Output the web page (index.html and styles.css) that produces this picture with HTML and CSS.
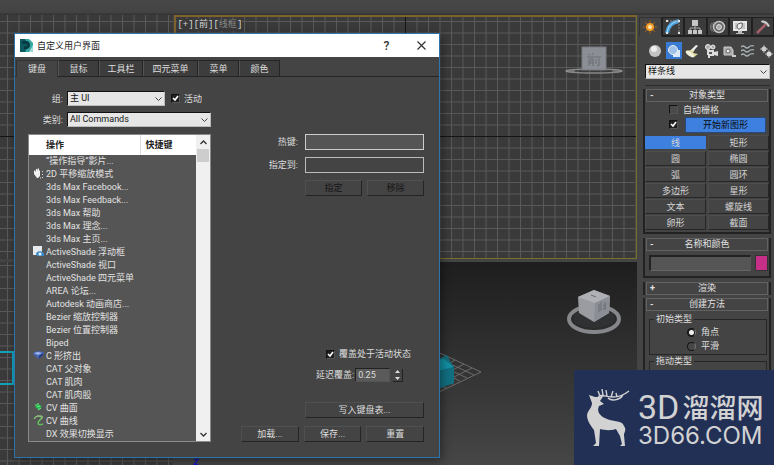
FILE: index.html
```
<!DOCTYPE html>
<html lang="zh-CN">
<head>
<meta charset="utf-8">
<meta name="viewport" content="width=device-width, initial-scale=1">
<title>自定义用户界面</title>
<link rel="stylesheet" href="styles.css">
</head>
<body>
<header class="toolbar"></header>
<div class="workspace">
  <main class="viewports">
    <section class="viewport">
      <svg class="scene" aria-hidden="true">
        <defs><pattern id="gridA" x="7" y="121" width="11.5" height="11.5" patternUnits="userSpaceOnUse"><path d="M.5 0V11.5M0 .5H11.5" stroke="#5a5a5a" fill="none"/></pattern></defs>
        <rect width="100%" height="100%" fill="url(#gridA)"/>
        <path d="M0 121.5H800" stroke="#141414"/>
      </svg>
    </section>
    <section class="viewport viewport-active">
      <svg class="scene" aria-hidden="true">
        <defs><pattern id="gridB" x="229" y="119" width="11.5" height="11.5" patternUnits="userSpaceOnUse"><path d="M.5 0V11.5M0 .5H11.5" stroke="#5a5a5a" fill="none"/></pattern></defs>
        <rect width="100%" height="100%" fill="url(#gridB)"/>
        <path d="M0 119.5H2000M229.5 0V800" stroke="#141414"/>
      </svg>
      <p class="view-label">[+][前][<span class="dim">线框</span>]</p>
      <svg class="cube-front" width="60" height="30" viewBox="0 0 60 30" aria-hidden="true">
        <ellipse cx="30" cy="25" rx="28" ry="2" fill="none" stroke="#858789" stroke-width="1.5"/>
        <path d="M2 25H11M49 25H58" stroke="#999" />
        <rect x="18" y="1" width="24" height="23" fill="#8b8e95" stroke="#777a80"/>
        <path d="M24 8l2 1M29 7l-1 2M23 11H37M25 13v7M25 13h4v7M25 15h4M25 17h4M32 13v5M35 12v8l-2-1" stroke="#6c6f76" fill="none"/>
      </svg>
    </section>
    <section class="viewport">
      <svg class="scene" aria-hidden="true">
        <defs><pattern id="gridC" x="7" y="3" width="11.5" height="11.5" patternUnits="userSpaceOnUse"><path d="M.5 0V11.5M0 .5H11.5" stroke="#5a5a5a" fill="none"/></pattern></defs>
        <rect width="100%" height="100%" fill="url(#gridC)"/>
        <rect x="-2" y="90" width="15" height="32" fill="none" stroke="#12a2bb" stroke-width="2"/>
      </svg>
    </section>
    <section class="viewport viewport-persp">
      <svg class="scene" aria-hidden="true">
        <g stroke="#777" stroke-width=".8" fill="none">
          <path d="M240 79L307 110L240 142M240 85L300 113M240 91L293 116M240 98L286 119M240 104L279 122M240 111L272 126M240 117L265 130M240 124L258 133M240 135L298 106M240 129L290 102M240 122L281 98M240 116L273 94M240 110L265 91M240 103L257 87"/>
        </g>
        <path d="M262 98L273 93L280 106L276 121L262 127Z" fill="#176c7a"/>
        <path d="M258 98L270 97L280 105L264 109Z" fill="#138fa2"/>
        <path d="M264 109V127L260 126V106Z" fill="#07323b"/>
        <path d="M264 109L280 105V121L264 127Z" fill="#116f80"/>
        <path d="M20 197.500h4l-4 5h4" stroke="#1515b8" stroke-width="1.300" fill="none"/>
      </svg>
      <svg class="cube-persp" width="56" height="46" viewBox="0 0 56 46" aria-hidden="true">
        <ellipse cx="28" cy="30" rx="25" ry="13" fill="none" stroke="#85878a" stroke-width="4"/>
        <ellipse cx="28" cy="29" rx="21" ry="10" fill="#303132"/>
        <path d="M28 1L44 7L43 24L28 33L13 24L12 8Z" fill="#9a9ca2"/>
        <path d="M12 8L28 1L44 7L29 14Z" fill="#aeb0b5"/>
        <path d="M29 14L44 7L43 24L28 33Z" fill="#8b8e95"/>
        <path d="M25 6l5 2M33 15v8M35 13v9M37 17l3-2M37 20l3-2M39 13v8" stroke="#6b6e75" fill="none"/>
      </svg>
    </section>
  </main>

  <aside class="panel">
    <nav class="panel-tabs">
      <button class="ptab ptab-on" aria-label="创建"><svg width="16" height="16" viewBox="0 0 16 16"><path d="M8 1v14M1 8h14M3 3l10 10M13 3L3 13" stroke="#a45d12" stroke-width="1"/><circle cx="8" cy="8" r="4" fill="#f39a28"/><circle cx="8" cy="8" r="2" fill="#ffe7a8"/></svg></button>
      <button class="ptab" aria-label="修改"><svg width="16" height="16" viewBox="0 0 16 16"><path d="M2 14C3 7 7 3 14 2" stroke="#4ba0dd" stroke-width="4" fill="none"/><path d="M2 14C3 7 7 3 14 2" stroke="#a6dcfa" fill="none"/><path d="M2 2h12v12" stroke="#888" stroke-dasharray="2 1" fill="none"/><path d="M1 1h2v2H1zM13 1h2v2h-2zM1 13h2v2H1zM13 13h2v2h-2z" fill="#ddd"/></svg></button>
      <button class="ptab" aria-label="层次"><svg width="16" height="16" viewBox="0 0 16 16"><path d="M5 1h6v6H5zM1 11h4v4H1zM6 11h4v4H6zM11 11h4v4h-4z" fill="#c6c6c6"/><path d="M8 6v5M3 11V9h10v2" stroke="#aaa" fill="none"/></svg></button>
      <button class="ptab" aria-label="运动"><svg width="16" height="16" viewBox="0 0 16 16"><path d="M4 3C1 5 1 11 4 13M2 4C0 6 0 10 2 12" stroke="#777" fill="none"/><circle cx="9" cy="8" r="5.500" fill="#666" stroke="#c4c4c4" stroke-width="1.500"/><circle cx="9" cy="8" r="2.500" fill="#aaa" stroke="#ddd"/></svg></button>
      <button class="ptab" aria-label="显示"><svg width="16" height="16" viewBox="0 0 16 16"><path d="M1 2h14v10H1z" fill="#e6e6e6"/><path d="M3 4h10v6H3z" fill="#c5c5c5"/><path d="M5 7c0-2 3-3 5-3 1 3-1 6-3 6-1 0-2-1-2-3z" fill="#eee" stroke="#555"/><path d="M6 12h4v2h2v1H4v-1h2z" fill="#bbb"/></svg></button>
      <button class="ptab" aria-label="实用程序"><svg width="16" height="16" viewBox="0 0 16 16"><path d="M2 14L11 5" stroke="#a3606a" stroke-width="2.500"/><path d="M6 2c3-1 5 0 7 2l2 3-2 1-2-3-5-2z" fill="#c8c8c8"/></svg></button>
    </nav>
    <div class="categories">
      <button class="cat" aria-label="几何体"><svg width="14" height="14" viewBox="0 0 14 14"><circle cx="7" cy="7" r="6" fill="#c3c3c3"/><circle cx="6" cy="5" r="3" fill="#ededed"/></svg></button>
      <button class="cat cat-on" aria-label="图形"><svg width="14" height="14" viewBox="0 0 14 14"><path d="M6 6h7v7H6z" fill="#dce9f8"/><circle cx="6" cy="6" r="4.500" fill="#9fc1ea" stroke="#eee"/></svg></button>
      <button class="cat" aria-label="灯光"><svg width="14" height="14" viewBox="0 0 14 14"><path d="M12 1L8 9l5 1-4 3-8-6 5-1z" fill="#ded99a"/><path d="M11 1l2 1-5 5-2-1z" fill="#eee"/><ellipse cx="5" cy="10" rx="5" ry="2" transform="rotate(35 5 10)" fill="#f1f0db"/></svg></button>
      <button class="cat" aria-label="摄影机"><svg width="14" height="14" viewBox="0 0 14 14"><circle cx="4" cy="3" r="2.500" fill="#aaa" stroke="#eee"/><circle cx="9" cy="3" r="2" fill="#aaa" stroke="#eee"/><path d="M3 6h7v2l4-1v5l-4-1v1H6v2H4v-3H3z" fill="#ddd"/><path d="M5 8h3v2H5z" fill="#555"/></svg></button>
      <button class="cat" aria-label="辅助对象"><svg width="14" height="14" viewBox="0 0 14 14"><path d="M2 3h7l2 3v5H2z" fill="#aaa" stroke="#ccc"/><circle cx="6" cy="7" r="2" fill="#eee" stroke="#666"/><path d="M10 12h4" stroke="#ccc" stroke-width="2"/></svg></button>
      <button class="cat" aria-label="空间扭曲"><svg width="14" height="14" viewBox="0 0 14 14"><path d="M0 3q2-2 4 0t4 0 5-1M0 7q2-2 4 0t4 0 5-1M0 11q2-2 4 0t4 0 5-1" stroke="#a7b1b4" stroke-width="1.300" fill="none"/></svg></button>
      <button class="cat" aria-label="系统"><svg width="14" height="14" viewBox="0 0 14 14"><path d="M1 5h8M5 1v8M6 10h8M10 6v8" stroke="#aaa"/><circle cx="5" cy="5" r="2.500" fill="#ccc"/><circle cx="10" cy="10" r="2.500" fill="#ddd"/></svg></button>
    </div>
    <select class="combo panel-combo" aria-label="对象类别"><option>样条线</option></select>

    <section class="rollout">
      <h2><span>-</span>对象类型</h2>
      <div class="type-opts">
        <label class="auto-grid"><input type="checkbox" class="check check-off">自动栅格</label>
        <div class="start-row"><input type="checkbox" class="check" checked aria-label="开始新图形"><button class="start">开始新图形</button></div>
      </div>
      <div class="types">
        <button class="type type-on">线</button><button class="type">矩形</button>
        <button class="type">圆</button><button class="type">椭圆</button>
        <button class="type">弧</button><button class="type">圆环</button>
        <button class="type">多边形</button><button class="type">星形</button>
        <button class="type">文本</button><button class="type">螺旋线</button>
        <button class="type">卵形</button><button class="type">截面</button>
      </div>
    </section>
    <section class="rollout">
      <h2><span>-</span>名称和颜色</h2>
      <div class="name-row"><input class="name" type="text" aria-label="名称"><button class="swatch" aria-label="颜色"></button></div>
    </section>
    <section class="rollout rollout-closed">
      <h2><span>+</span>渲染</h2>
    </section>
    <section class="rollout">
      <h2><span>-</span>创建方法</h2>
      <fieldset class="group">
        <legend>初始类型</legend>
        <label><input type="radio" name="initial" checked>角点</label>
        <label><input type="radio" name="initial">平滑</label>
      </fieldset>
      <fieldset class="group group-drag">
        <legend>拖动类型</legend>
      </fieldset>
    </section>
  </aside>
</div>

<div class="dialog" role="dialog" aria-labelledby="dialog-title">
  <header class="titlebar">
    <svg width="13" height="13" viewBox="0 0 13 13" aria-hidden="true"><path d="M0 0h9l4 4v9H0z" fill="#36a6a2"/><path d="M0 0h5l4 6-4 7H0z" fill="#0d5b61"/><path d="M2 2h5c4 1 4 7 0 8H4V7h3V5H2z" fill="#073c43"/><path d="M9 13L13 6v7z" fill="#a4dcd5"/></svg>
    <h1 id="dialog-title">自定义用户界面</h1>
    <button class="win-btn" aria-label="帮助">?</button>
    <button class="win-btn" aria-label="关闭"><svg width="9" height="9" viewBox="0 0 9 9"><path d="M.5 .5l8 8M8.500 .5l-8 8" stroke="#333" stroke-width="1.200"/></svg></button>
  </header>
  <nav class="tabs">
    <button class="tab tab-on">键盘</button><button class="tab">鼠标</button><button class="tab tab-mid">工具栏</button><button class="tab tab-wide">四元菜单</button><button class="tab">菜单</button><button class="tab">颜色</button>
  </nav>
  <div class="filters">
    <label for="group">组:</label>
    <div class="filter-row">
      <select id="group" class="combo combo-short"><option>主 UI</option></select>
      <label class="inline"><input type="checkbox" class="check" checked>活动</label>
    </div>
    <label for="category">类别:</label>
    <select id="category" class="combo combo-long"><option>All Commands</option></select>
  </div>
  <div class="dialog-body">
    <div class="list">
      <table class="commands">
        <thead><tr><th>操作</th><th class="key">快捷键</th></tr></thead>
        <tbody>
          <tr><td colspan="2">“操作指导”影片...</td></tr>
          <tr><td colspan="2"><svg class="ico" width="11" height="11" viewBox="0 0 11 11"><path d="M1 3l1-1 1 2V1h1v2l1-3 1 1v2l1-1v6l-2 2H4L1 6z" fill="#f2f2f2"/><path d="M9.500 3v1M9.500 6v1M9.500 9v1M7 10h1" stroke="#ddd"/></svg>2D 平移缩放模式</td></tr>
          <tr><td colspan="2">3ds Max Facebook...</td></tr>
          <tr><td colspan="2">3ds Max Feedback...</td></tr>
          <tr><td colspan="2">3ds Max 帮助</td></tr>
          <tr><td colspan="2">3ds Max 理念...</td></tr>
          <tr><td colspan="2">3ds Max 主页...</td></tr>
          <tr><td colspan="2"><svg class="ico" width="11" height="11" viewBox="0 0 11 11"><path d="M0 0h9v9H0z" fill="#e8ebee"/><path d="M3 8c0-3 5-4 8-1v3H4z" fill="#3b8bc8"/><circle cx="7" cy="8" r="1.500" fill="#e9f5ff"/></svg>ActiveShade 浮动框</td></tr>
          <tr><td colspan="2">ActiveShade 视口</td></tr>
          <tr><td colspan="2">ActiveShade 四元菜单</td></tr>
          <tr><td colspan="2">AREA 论坛...</td></tr>
          <tr><td colspan="2">Autodesk 动画商店...</td></tr>
          <tr><td colspan="2">Bezier 缩放控制器</td></tr>
          <tr><td colspan="2">Bezier 位置控制器</td></tr>
          <tr><td colspan="2">Biped</td></tr>
          <tr><td colspan="2"><svg class="ico" width="11" height="11" viewBox="0 0 11 11"><path d="M0 3l4-2 7 1-1 3-4 4-5-4z" fill="#4466b5"/><path d="M1 3l4-1 4 1-4 2z" fill="#9fb5ec"/><path d="M6 6l4-3v2L6 9z" fill="#263c80"/></svg>C 形挤出</td></tr>
          <tr><td colspan="2">CAT 父对象</td></tr>
          <tr><td colspan="2">CAT 肌肉</td></tr>
          <tr><td colspan="2">CAT 肌肉股</td></tr>
          <tr><td colspan="2"><svg class="ico" width="11" height="11" viewBox="0 0 11 11"><path d="M2 5l3-3 4 2-3 4z" fill="#22b84c"/><path d="M2 3h2M5 1v2M4 5l3-1M5 8l3-2" stroke="#6bf08b"/></svg>CV 曲面</td></tr>
          <tr><td colspan="2"><svg class="ico" width="11" height="11" viewBox="0 0 11 11"><path d="M1 4c2-4 5-3 8-2-1 3-4 4-4 6s2 2 5 1" stroke="#62bd60" stroke-width="1.500" fill="none"/><path d="M1 4l3-3h5v3" stroke="#a7b98d" fill="none"/></svg>CV 曲线</td></tr>
          <tr><td colspan="2">DX 效果切换显示</td></tr>
        </tbody>
      </table>
      <div class="scroll">
        <button aria-label="向上滚动"><svg width="7" height="5" viewBox="0 0 7 5"><path d="M.5 4L3.500 1l3 3" stroke="#333" stroke-width="1.300" fill="none"/></svg></button>
        <div class="thumb"></div>
        <button class="down" aria-label="向下滚动"><svg width="7" height="5" viewBox="0 0 7 5"><path d="M.5 1l3 3 3-3" stroke="#333" stroke-width="1.300" fill="none"/></svg></button>
      </div>
    </div>
    <div class="actions">
      <div class="keys">
        <label for="hotkey">热键:</label><input id="hotkey" class="hot" type="text">
        <label for="assigned">指定到:</label><input id="assigned" type="text" readonly>
        <div class="pair"><button class="btn" disabled>指定</button><button class="btn" disabled>移除</button></div>
      </div>
      <div class="bottom">
        <div class="override">
          <label class="inline wide"><input type="checkbox" class="check" checked>覆盖处于活动状态</label>
          <div class="delay"><label for="delay">延迟覆盖:</label><input id="delay" type="text" value="0.25"><button class="spin" aria-label="调整"><svg width="7" height="10" viewBox="0 0 7 10"><path d="M3.500 0L6 3H1zM3.500 10L6 7H1z" fill="#ddd"/></svg></button></div>
        </div>
        <button class="btn write">写入键盘表...</button>
        <div class="trio"><button class="btn">加载...</button><button class="btn">保存...</button><button class="btn">重置</button></div>
      </div>
    </div>
  </div>
</div>

<div class="brand">
  <svg width="44" height="58" viewBox="0 0 44 58" aria-hidden="true">
    <path d="M3 6L9 8L13 8L18 6L14 12L18 15L13 17C10 23 15 28 21 30C28 33 36 31 38 37C41 41 38 43 38 46L39 57H34L36 55L34 47L30 40C24 42 18 41 14 40L13 57H7L10 54L8 41C5 37 1 32 1 26C2 21 6 19 6 14Z" fill="#d2d2d2"/>
    <path d="M12 9C13 4 20 8 27 8S38 6 43 2M14 7L12 2M17 6L16 0M21 7L20 1M25 8L27 2M31 8L30 4M22 9C25 12 33 12 37 6" stroke="#d2d2d2" stroke-width="1.400" fill="none"/>
  </svg>
  <div class="brand-text">
    <p class="brand-name">3D<span>溜溜网</span></p>
    <p class="brand-url">3D66.COM</p>
  </div>
</div>
</body>
</html>
```
FILE: styles.css
```
* { box-sizing: border-box; }
body {
  margin: 0;
  height: 100vh;
  display: flex;
  flex-direction: column;
  overflow: hidden;
  background: #444;
  color: #ddd;
  font: 9px/12px Roboto, "Noto Sans CJK SC", sans-serif;
}
h1, h2, p { margin: 0; font: inherit; }
button, input, select { font: inherit; color: inherit; margin: 0; padding: 0; border: 0; border-radius: 0; }
button { background: none; display: flex; align-items: center; justify-content: center; white-space: nowrap; }
svg { display: block; flex: none; }

.toolbar { height: 15px; flex: none; background: linear-gradient(#484848, #434343 80%, #333); }
.workspace { flex: 1; min-height: 0; display: grid; grid-template-columns: 1fr 137px; }
.viewports { display: grid; grid-template-columns: 3fr 8fr; grid-template-rows: 6fr 5fr; gap: 3px 1px; min-height: 0; }
.viewport { position: relative; overflow: hidden; background: #3a3a3a; }
.viewport-active { border: 1px solid #77702a; border-top: 2px solid #80622c; border-left: 2px solid #80622c; }
.viewport-persp { background: linear-gradient(#1e1e1e, #464646); }
.scene { position: absolute; inset: 0; width: 100%; height: 100%; }
.view-label { position: absolute; left: 1px; top: 2px; background: #3a3a3a; color: #d6d6d6; font: 9px/12px "Liberation Mono", "Noto Sans CJK SC", monospace; }
.view-label .dim { color: #888; }
.cube-front { position: absolute; right: 12px; top: 29px; }
.cube-persp { position: absolute; right: 15px; top: 27px; }

.panel { padding: 2px 2px 0 4px; overflow: hidden; background: #444; }
.panel-tabs { display: grid; grid-template-columns: repeat(6, 1fr); margin: 0 -2px 0 -2px; }
.ptab { height: 20px; background: #3b3b3b; border: 1px solid #202020; border-width: 1px 1px 2px; }
.ptab-on { background: #444; border-color: #333 #202020 #444 #333; }
.categories { display: flex; justify-content: space-between; padding: 5px 0 0 6px; margin-right: -2px; }
.cat { width: 16px; height: 17px; }
.cat-on { background: #3a7bd5; }
.combo { appearance: none; display: block; height: 14px; padding: 0 2px; line-height: 11px; background: #e6e6e6 url("data:image/svg+xml,%3Csvg xmlns='http://www.w3.org/2000/svg' width='7' height='4'%3E%3Cpath d='M.5 .5l3 3 3-3' fill='none' stroke='%23444'/%3E%3C/svg%3E") no-repeat right 2px center; color: #151515; border: 1px solid #bbb; border-top-color: #111; border-left-color: #111; }
.panel-combo { width: 125px; height: 15px; margin: 5px 0 10px 4px; line-height: 13px; box-shadow: 0 6px 0 #444, 0 7px 0 #2a2a2a; }

.rollout { border: 1px solid #222; border-width: 0 2px 2px; margin: 0 1px 4px 2px; padding-bottom: 2px; }
.rollout h2 { position: relative; height: 13px; border: 1px solid #626262; background: #444; text-align: center; line-height: 11px; margin: 0 1px; color: #e2e2e2; }
.rollout h2 span { position: absolute; left: 3px; font-weight: 700; }
.rollout-closed { border-bottom: 0; padding: 0; margin-bottom: 3px; }
.type-opts { padding: 0 3px 0 24px; }
.auto-grid { display: flex; align-items: center; gap: 5px; height: 15px; }
.start-row { display: flex; gap: 7px; }
.start-row .check { margin-top: 3px; }
.start { flex: 1; height: 16px; background: #3d80df; color: #0a0a0a; border: 1px solid #2a4a7c; }
.check { appearance: none; flex: none; width: 9px; height: 9px; background: #1f1f1f; border: 1px solid #111; border-right-color: #555; border-bottom-color: #555; }
.check:checked { background: #1f1f1f url("data:image/svg+xml,%3Csvg xmlns='http://www.w3.org/2000/svg' width='7' height='7'%3E%3Cpath d='M1 3l2 2 3-4' fill='none' stroke='white' stroke-width='1.6'/%3E%3C/svg%3E") no-repeat center; }
.check-off { background: #4a4a4a; }
.types { display: grid; grid-template-columns: 1fr 1fr; gap: 1px 2px; margin-top: 2px; }
.type { height: 15px; border: 1px solid #4e4e4e; border-right-color: #262626; border-bottom-color: #262626; color: #d5d5d5; }
.type-on { background: #3d80df; height: 13px; border: 0; margin-top: 1px; }
.name-row { display: flex; gap: 4px; padding: 4px 1px 3px 4px; }
.name { flex: 1; min-width: 0; height: 16px; background: #555; border: 2px solid #222; border-right: 1px solid #555; border-bottom: 1px solid #666; }
.swatch { width: 13px; height: 16px; background: #c62f88; border: 1px solid #333; }
.group { margin: 0 2px 0 4px; padding: 0 0 1px; border: 1px solid #262626; min-width: 0; }
.group:first-of-type { margin-top: 2px; }
.group legend { margin-left: 4px; padding: 0 2px; line-height: 12px; }
.group label { display: flex; align-items: center; gap: 5px; height: 14px; padding-left: 37px; }
.group-drag { height: 48px; }
.group input { appearance: none; width: 9px; height: 9px; border-radius: 50%; border: 1px solid #151515; border-right-color: #777; background: #484848; }
.group input:checked { background: radial-gradient(circle, #eee 2px, #222 3px); }

.dialog { position: absolute; left: 14px; top: 33px; width: 426px; background: #444; border: 1px solid #2b75ae; box-shadow: 2px 3px 9px #0006; }
.titlebar { height: 23px; display: flex; align-items: center; background: #fff; color: #222; padding-left: 5px; }
.titlebar h1 { flex: 1; margin-left: 4px; }
.win-btn { width: 35px; height: 23px; font-size: 12px; font-weight: 500; color: #333; }
.tabs { display: flex; height: 20px; padding: 3px 0 0 1px; border-bottom: 1px solid #242424; }
.tab { width: 41px; height: 16px; background: #3d3d3d; border: 1px solid #242424; border-left-color: #555; border-bottom: 0; }
.tab-on { width: 42px; height: 17px; background: #444; border-color: #333; }
.tab-mid { width: 44px; }
.tab-wide { width: 55px; }
.filters { display: grid; grid-template-columns: 38px 1fr; gap: 6px 4px; align-items: center; padding: 14px 0 7px 10px; }
.filters > label { text-align: right; }
.filter-row, .inline { display: flex; align-items: center; }
.filter-row { gap: 6px; }
.inline { gap: 4px; }
.combo-short { width: 98px; height: 15px; line-height: 13px; }
.combo-long { width: 144px; height: 15px; line-height: 13px; }
.dialog-body { display: grid; grid-template-columns: 183px 1fr; column-gap: 30px; padding: 0 15px 15px 13px; }
.list { display: flex; border: 1px solid #8a8a8a; background: #555; }
.commands { flex: 1; border-collapse: collapse; table-layout: fixed; }
.commands th { height: 20px; padding: 0 0 0 17px; background: #fff; color: #222; text-align: left; font-weight: 700; }
.commands .key { width: 56px; padding-left: 5px; border-left: 1px solid #ddd; }
.commands td { position: relative; height: 13px; padding: 0 0 0 17px; line-height: 13px; white-space: nowrap; color: #e2e2e2; }
.ico { position: absolute; left: 4px; top: 0; }
.scroll { width: 14px; display: flex; flex-direction: column; background: #f0f0f0; }
.scroll button { height: 14px; color: #333; }
.thumb { height: 13px; margin: 0 1px; background: #cdcdcd; }
.scroll .down { margin-top: auto; }
.actions { display: flex; flex-direction: column; justify-content: space-between; }
.keys { display: grid; grid-template-columns: 1fr 119px; gap: 7px; align-items: center; }
.keys > label { text-align: right; }
.keys input { width: 100%; height: 16px; background: #444; border: 1px solid #bbb; }
.keys .hot { background: #555; border-color: #ccc; }
.pair { grid-column: 2; }
.pair, .trio { display: grid; grid-auto-flow: column; grid-auto-columns: 1fr; gap: 5px; }
.btn { height: 16px; border: 1px solid #505050; border-right: 1px solid #242424; border-bottom: 1px solid #242424; color: #ddd; }
.btn:disabled { color: #151515; }
.bottom { display: flex; flex-direction: column; align-items: flex-end; }
.override { width: 108px; margin-bottom: 20px; }
.wide { padding-left: 10px; margin-bottom: 8px; }
.delay { display: flex; align-items: center; }
.delay input { width: 35px; height: 14px; margin: 0 3px 0 1px; padding-left: 2px; background: #5a5a5a; border: 1px solid #222; border-right-color: #555; border-bottom-color: #555; }
.spin { width: 10px; height: 13px; border-right: 1px solid #222; border-bottom: 1px solid #222; }
.write { width: 119px; margin-bottom: 8px; }
.trio { width: 100%; }

.brand { position: absolute; right: 0; bottom: 0; display: flex; align-items: center; gap: 8px; width: 200px; height: 95px; padding-left: 12px; background: #223056; color: #d2d2d2; }
.brand-text { padding-top: 4px; }
.brand-name { display: flex; gap: 3px; font: 400 34px/32px Roboto, sans-serif; white-space: nowrap; }
.brand-name span { font: 500 27px/32px "Noto Sans CJK SC", sans-serif; }
.brand-url { font: 400 24px/26px Inter, sans-serif; white-space: nowrap; }
```
